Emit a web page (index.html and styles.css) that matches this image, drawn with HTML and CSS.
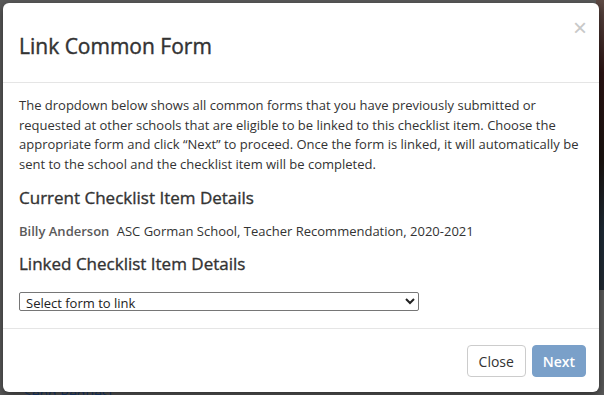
FILE: index.html
```html
<!DOCTYPE html>
<html lang="en">
<head>
  <meta charset="UTF-8">
  <title>Link Common Form</title>
  <link rel="stylesheet" href="styles.css">
</head>
<body>
  <!-- page behind the backdrop -->
  <div class="page">
    <div class="page-photo"></div>
    <a class="page-link" href="#">Send Request</a>
  </div>

  <div class="modal">
    <div class="modal-header">
      <h4 class="modal-title">Link Common Form</h4>
      <button class="modal-close" type="button">&times;</button>
    </div>

    <div class="modal-body">
      <p class="intro">The dropdown below shows all common forms that you have previously submitted or requested at other schools that are eligible to be linked to this checklist item. Choose the appropriate form and click &ldquo;Next&rdquo; to proceed. Once the form is linked, it will automatically be sent to the school and the checklist item will be completed.</p>

      <h5 class="section-title">Current Checklist Item Details</h5>
      <div class="item-details">
        <span class="student">Billy Anderson</span>
        <span>ASC Gorman School, Teacher Recommendation, 2020-2021</span>
      </div>

      <h5 class="section-title">Linked Checklist Item Details</h5>
      <select class="form-select">
        <option>Select form to link</option>
      </select>
    </div>

    <div class="modal-footer">
      <button class="btn btn-default" type="button">Close</button>
      <button class="btn btn-primary" type="button" disabled>Next</button>
    </div>
  </div>
</body>
</html>
```

FILE: styles.css
```css
html, body {
  margin: 0;
  padding: 0;
  height: 100%;
  overflow: hidden;
}

body {
  background: #5a5a5a;
  font-family: 'Open Sans', 'Liberation Sans', sans-serif;
  color: #333;
}

/* page behind the backdrop */
.page {
  position: absolute;
  inset: 0;
}

.page-photo {
  position: absolute;
  top: 0;
  right: 0;
  width: 8px;
  height: 290px;
  background: linear-gradient(180deg, #5e4a44 0%, #2c1414 25%, #1b1310 55%, #1e2a36 80%, #222a33 100%);
}

.page-link {
  position: absolute;
  left: 24px;
  top: 386px;
  font-size: 14px;
  line-height: 16px;
  color: #1d3f74;
  text-decoration: none;
}

/* 弹窗 */
.modal {
  position: absolute;
  top: 3px;
  left: 3px;
  width: 596px;
  height: 389px;
  background: #fff;
  border-radius: 6px;
  box-shadow: 0 3px 9px rgba(0,0,0,0.5);
  display: flex;
  flex-direction: column;
}

.modal-header {
  position: relative;
  padding: 31px 16px 23px;
  border-bottom: 1px solid #e5e5e5;
}

.modal-title {
  margin: 0;
  font-size: 21px;
  font-weight: 400;
  line-height: 25px;
  color: #333;
  -webkit-text-stroke: 0.4px #333;
}

.modal-close {
  position: absolute;
  top: 13px;
  right: 12px;
  padding: 0;
  border: none;
  background: none;
  font-family: 'Liberation Sans', sans-serif;
  font-size: 24px;
  line-height: 24px;
  color: #c8c8c8;
  cursor: pointer;
}

.modal-body {
  flex: 1;
  padding: 13px 16px 0;
  font-size: 13px;
}

.intro {
  margin: 0;
  line-height: 19.5px;
}

.section-title {
  margin: 11px 0 0;
  font-size: 17px;
  font-weight: 400;
  line-height: 26px;
  color: #333;
  -webkit-text-stroke: 0.35px #333;
}

.item-details {
  margin-top: 11px;
  line-height: 18px;
}

.student {
  color: #5a5a5a;
  font-weight: 600;
  margin-right: 4px;
}

.form-select {
  display: block;
  margin: 15px 0 0;
  width: 400px;
  height: 19px;
  padding: 0 2px;
  font-family: 'Open Sans', 'Liberation Sans', sans-serif;
  font-size: 13px;
  color: #222;
  background: #fff;
  border: 1px solid #767676;
  border-radius: 2px;
}

.modal-footer {
  display: flex;
  justify-content: flex-end;
  gap: 6px;
  padding: 16px 13px 15px;
  border-top: 1px solid #e5e5e5;
}

.btn {
  height: 32px;
  padding: 0 10px;
  font-family: 'Open Sans', 'Liberation Sans', sans-serif;
  font-size: 14px;
  border-radius: 4px;
  border: 1px solid #ccc;
  cursor: pointer;
}

.btn-default {
  min-width: 59px;
  background: #fff;
  color: #333;
}

.btn-primary {
  min-width: 54px;
  background: #7aa0c9;
  border-color: #7aa0c9;
  color: #fff;
  font-weight: 600;
}
```
